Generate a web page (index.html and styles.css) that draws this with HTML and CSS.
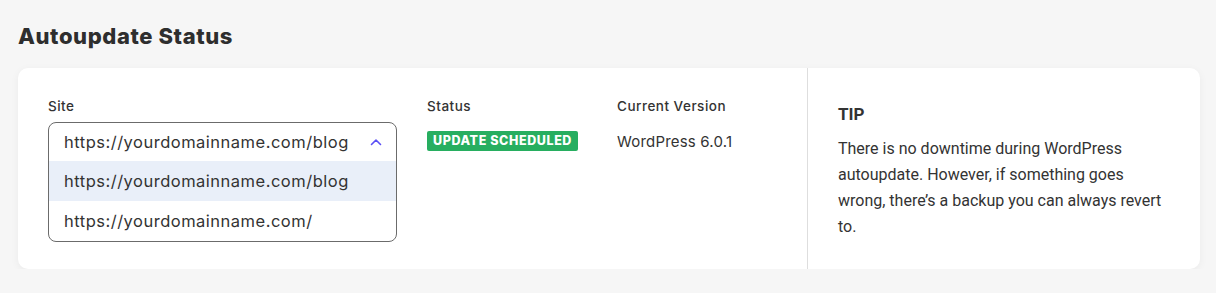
FILE: index.html
```html
<!DOCTYPE html>
<html lang="en">

<head>
    <meta charset="UTF-8">
    <meta name="viewport" content="width=device-width, initial-scale=1.0">
    <title>Autoupdate Status</title>
    <link rel="stylesheet" href="styles.css">
</head>

<body>
    <div class="page">
        <h2 class="page-title">Autoupdate Status</h2>

        <div class="card">
            <div class="card-main">
                <div class="col col-site">
                    <div class="col-label">Site</div>
                    <div class="select open">
                        <div class="select-current">
                            <span>https://yourdomainname.com/blog</span>
                            <svg class="chevron" width="12" height="8" viewBox="0 0 12 8">
                                <path d="M1.5 6.5 L6 2 L10.5 6.5" fill="none" stroke="#5b4ff5" stroke-width="1.6" stroke-linecap="round" stroke-linejoin="round" />
                            </svg>
                        </div>
                        <div class="select-option selected">https://yourdomainname.com/blog</div>
                        <div class="select-option">https://yourdomainname.com/</div>
                    </div>
                </div>

                <div class="col col-status">
                    <div class="col-label">Status</div>
                    <div class="col-value">
                        <span class="badge">Update Scheduled</span>
                    </div>
                </div>

                <div class="col col-version">
                    <div class="col-label">Current Version</div>
                    <div class="col-value">WordPress 6.0.1</div>
                </div>
            </div>

            <div class="card-tip">
                <h3 class="tip-title">TIP</h3>
                <p class="tip-text">There is no downtime during WordPress autoupdate. However, if something goes wrong, there’s a backup you can always revert to.</p>
            </div>
        </div>
    </div>
</body>

</html>
```

FILE: styles.css
```css
body {
    font-family: Inter, "Open Sans", sans-serif;
    margin: 0;
    padding: 0;
    background-color: #f6f6f6;
    color: #333;
}

.page {
    padding: 24px 16px 0 18px;
}

.page-title {
    margin: 0 0 20px;
    font-size: 22px;
    font-weight: 800;
    line-height: 24px;
    color: #2e2e2e;
    letter-spacing: 0.6px;
}

.card {
    display: flex;
    background-color: #fff;
    border-radius: 10px;
    box-shadow: 0 2px 8px rgba(0, 0, 0, 0.05);
    height: 201px;
}

.card-main {
    display: flex;
    gap: 30px;
    padding: 29px 30px 0;
    width: 729px;
    border-right: 1px solid #dedede;
}

.col-site {
    width: 349px;
}

.col-status,
.col-version {
    width: 160px;
}

.col-label {
    font-size: 13.5px;
    font-weight: 500;
    line-height: 18px;
    color: #333;
    margin-bottom: 7px;
    letter-spacing: 0.5px;
}

.col-value {
    height: 38px;
    display: flex;
    align-items: center;
    font-size: 15px;
    letter-spacing: 0.2px;
    color: #333;
}

.badge {
    display: inline-block;
    background-color: #27ae60;
    color: #fff;
    font-size: 12.5px;
    font-weight: 800;
    text-transform: uppercase;
    line-height: 20px;
    padding: 0 6px;
    border-radius: 2px;
    letter-spacing: 0.6px;
}

.select {
    border: 1px solid #6b6b6b;
    border-radius: 8px;
    overflow: hidden;
}

.select-current,
.select-option {
    display: flex;
    align-items: center;
    padding: 0 15px;
    font-size: 16.5px;
    letter-spacing: 0.5px;
    color: #333;
}

.select-current {
    height: 38px;
    justify-content: space-between;
    padding-right: 14px;
}

.select-option {
    height: 40px;
}

.select-option.selected {
    background-color: #e9eff9;
}

.chevron {
    display: block;
}

.card-tip {
    flex: 1;
    padding: 36px 34px 0 30px;
    font-family: Roboto, "Liberation Sans", sans-serif;
}

.tip-title {
    margin: 0 0 12px;
    font-size: 17px;
    font-weight: 700;
    line-height: 20px;
    color: #333;
}

.tip-text {
    margin: 0;
    font-size: 16px;
    line-height: 26px;
    color: #333;
}
```
